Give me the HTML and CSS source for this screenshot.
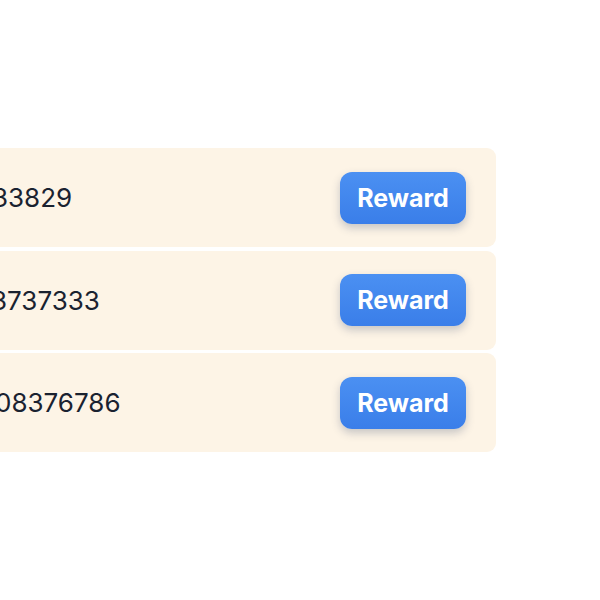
FILE: index.html
```html
<!DOCTYPE html>
<html>
<head>
<meta charset="utf-8">
<link rel="stylesheet" href="styles.css">
</head>
<body>
<div class="page">
  <div class="list">
    <div class="row"><span class="num num-a">33829</span><button class="btn">Reward</button></div>
    <div class="row"><span class="num num-b">3737333</span><button class="btn">Reward</button></div>
    <div class="row"><span class="num num-c">08376786</span><button class="btn">Reward</button></div>
  </div>
</div>
</body>
</html>
```
FILE: styles.css
```css
html, body {
  margin: 0;
  padding: 0;
  background: #ffffff;
  overflow: hidden;
}
.page {
  height: 600px;
  display: flex;
  align-items: center;
  font-family: Inter, "Noto Sans", sans-serif;
}
.list {
  width: 600px;
  margin-left: -104px;
  display: flex;
  flex-direction: column;
  gap: 3.5px;
}
.row {
  height: 99px;
  box-sizing: border-box;
  background: #fdf4e6;
  border-radius: 9px;
  display: flex;
  align-items: center;
  justify-content: space-between;
  padding: 0 30px 0 104px;
}
.num {
  font-size: 26px;
  color: #1a2230;
}
.num-a { margin-left: -8px; }
.num-b { margin-left: -9px; }
.num-c { margin-left: -5px; }
.btn {
  font-family: Inter, "Noto Sans", sans-serif;
  font-size: 25px;
  font-weight: 700;
  color: #ffffff;
  border: none;
  width: 126px;
  height: 52px;
  border-radius: 12px;
  background: linear-gradient(#4b90f2, #3a7ee9);
  box-shadow: 0 4px 8px rgba(40, 60, 100, 0.25);
  padding: 0;
}
```
